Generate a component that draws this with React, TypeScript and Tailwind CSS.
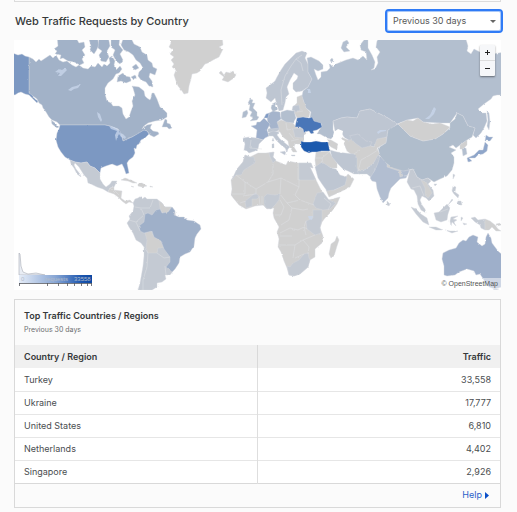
import React from "react";

type Shape = { name: string; fill: string; d: string };

const GREY = "#d0d0d0";
const PALE = "#c4cad3";
const SOFT = "#bec6d2";

const countries: Shape[] = [
  // North America
  { name: "Greenland", fill: GREY, d: "M168 36H222L223 45 219 47 223 49 221 53 219 57 213 60 208 63 205 64 202 68 200 71 197 73 192 74 191 79 189 86 188 93 184 94 182 91 178 86 176 81 174 75 176 70 172 67 174 64 171 60 174 57 170 54 173 50 169 47 171 43Z" },
  { name: "Iceland", fill: GREY, d: "M219 73 221 71 224 75 226 72 230 73 233 71 236 75 234 78 228 82 222 80 224 77Z" },
  { name: "Canada", fill: "#a2b2c8", d: "M29 57 33 59 36 62 39 59 41 61 44 59 50 55 53 58 56 55 59 60 63 62 67 61 72 65 76 67 79 65 83 68 88 69 91 66 95 67 98 63 102 67 104 64 107 66 110 63 109 58 112 56 115 61 114 65 117 69 120 66 122 69 119 73 116 74 113 79 108 83 105 88 105 94 107 101 111 103 113 106 119 106 122 108 123 114 126 119 129 117 131 111 133 106 132 101 135 95 133 88 132 86 139 87 144 91 145 96 147 98 150 100 152 93 154 93 157 99 160 107 164 110 167 113 167 117 162 120 155 121 148 123 144 126 142 129 147 125 152 124 150 128 153 131 158 132 159 134 154 137 150 135 147 131 144 130 140 133 132 137 123 141 122 136 118 129 110 126 105 125 H60L57 122 52 120 49 117 46 112 43 108 42 105 39 103 37 99 33 96 29 94Z" },
  { name: "Vancouver Island", fill: "#a2b2c8", d: "M51 120 55 123 59 127 57 128 52 124Z" },
  { name: "Newfoundland", fill: "#a2b2c8", d: "M165 119 167 120 167 123 170 124 172 128 169 129 167 127 162 127Z" },
  { name: "Baffin Island", fill: "#a2b2c8", d: "M124 36H130L134 44 140 47 142 52 147 55 148 60 152 63 153 67 157 69 155 75 150 73 149 77 152 81 153 87 149 86 146 82 141 80 138 76 139 72 143 68 140 63 136 60 133 55 129 52 124 50 121 45Z" },
  { name: "Southampton Island", fill: "#a2b2c8", d: "M118 76 123 73 125 76 130 77 131 81 126 83 121 81 117 82Z" },
  { name: "Victoria Island", fill: "#a2b2c8", d: "M57 36H75L79 43 84 42 85 47 82 50 85 55 82 59 84 63 80 65 74 62 68 61 63 58 60 59 61 55 55 54 57 51 54 49 58 46Z" },
  { name: "Somerset Island", fill: "#a2b2c8", d: "M88 36H97L99 45 96 51 94 54 90 50 91 46Z" },
  { name: "Boothia", fill: "#a2b2c8", d: "M99 36H108L110 46 107 51 109 57 106 62 101 61 99 55 102 51 98 48Z" },
  { name: "Melville Peninsula", fill: "#a2b2c8", d: "M111 36H120L119 45 123 50 120 54 123 60 120 64 116 61 113 55 115 50 111 47Z" },
  { name: "Foxe Islands", fill: "#a2b2c8", d: "M132 67 136 64 139 68 135 70Z M131 77 135 75 137 78 133 79Z" },
  { name: "Alaska", fill: "#7c98c2", d: "M10 52 18 55 22 54 25 56 29 57V93L32 95 35 99 38 101 37 103 33 99 29 95 25 94 21 92 18 93 15 95 10 94Z" },
  { name: "United States", fill: "#7c98c2", d: "M60 125H105L110 126 116 129 120 131 122 137 123 141 132 137 139 133 144 130 147 131 149 134 145 138 141 140 139 144 137 145 136 149 134 148 135 153 133 157 129 160 127 163 128 168 129 173 126 174 124 168 122 164 117 166 112 164 106 166 101 168 100 173 95 168 90 166 87 162 81 163 75 162 70 160 65 157 61 152 58 147 56 140 57 133 59 129Z" },
  { name: "Mexico", fill: PALE, d: "M70 160 75 162 81 163 87 162 90 166 95 168 100 173 100 179 103 184 106 187 110 184 112 181 117 181 114 187 110 188 108 192 103 189 97 187 91 184 88 183 87 178 84 175 79 167 75 163 74 165 76 169 80 174 81 177 77 174 74 168 71 164Z" },
  { name: "Central America", fill: GREY, d: "M108 192 110 188 114 187 114 190 122 191 121 198 125 201 130 200 133 203 129 202 126 204 122 201 118 197 114 194Z" },
  { name: "Caribbean", fill: GREY, d: "M121 180 125 178 131 180 137 183 133 183 128 181Z M138 184 142 183 147 186 142 187 138 186Z M131 186 134 187 132 187Z M150 186 153 187 150 187Z" },
  // South America
  { name: "South America", fill: PALE, d: "M133 203 135 199 138 198 141 196 142 199 145 197 147 199 153 199 157 199 162 203 165 207 172 207 175 211 176 222 178 255 178 264 174 270 170 275 165 275 166 279 162 282 157 283 157 287 152 290H138L140 283 142 272 143 266 144 256 144 247 141 243 136 240 133 233 129 227 127 223 130 219 129 216 133 211 134 206Z" },
  { name: "Guianas", fill: GREY, d: "M159 201 162 203 165 207 171 207 168 212 162 213 160 208Z" },
  { name: "Bolivia", fill: GREY, d: "M145 233 151 231 154 237 161 241 164 248 158 248 157 253 148 253 146 247 147 240Z" },
  { name: "Brazil", fill: "#9fb0c9", d: "M172 207 175 211 174 215 179 217 184 217 187 220 194 221 200 225 201 229 197 234 195 238 194 246 190 252 185 254 180 257 179 263 175 269 172 272 166 267 170 262 170 257 164 249 161 241 154 237 152 231 144 233 140 231 139 226 144 222 145 214 148 213 152 215 156 210 160 209 162 213 168 212Z" },
  // Europe
  { name: "Nordics", fill: SOFT, d: "M266 98 267 93 266 88 270 85 275 81 277 77 281 70 285 64 291 58 296 53 302 51 307 53 305 58 308 64 308 72 312 79 308 87 302 91 296 92 293 89 293 83 297 79 298 76 294 73 290 80 287 87 289 94 286 97 285 103 283 110 279 111 277 105 275 98 271 102Z" },
  { name: "Baltics", fill: GREY, d: "M297 97 302 95 304 102 306 108 310 112 309 117 297 118 294 112 293 107 297 103Z" },
  { name: "Lithuania", fill: SOFT, d: "M293 106 299 105 300 110 296 112 292 110Z" },
  { name: "United Kingdom", fill: "#afbccd", d: "M250 99 253 100 252 103 255 103 253 108 257 112 257 116 259 117 257 120 250 121 253 118 250 116 252 112 249 110 250 105 248 103Z" },
  { name: "Ireland", fill: "#afbccd", d: "M243 112 247 110 248 113 246 117 242 118Z" },
  { name: "Denmark", fill: "#afbccd", d: "M272 104 276 102 275 106 278 109 273 112 271 108Z" },
  { name: "Central Europe", fill: GREY, d: "M277 122 281 120 293 123 296 127 305 128 306 134 304 140 301 144 295 144 294 147 297 152 293 152 289 146 288 141 283 137 280 132 274 130 270 130 271 128Z" },
  { name: "Romania", fill: PALE, d: "M293 129 302 128 305 134 303 138 295 137Z" },
  { name: "Switzerland", fill: SOFT, d: "M268 129 277 126 280 129 275 132 268 132Z" },
  { name: "Poland", fill: "#b3bfcf", d: "M281 112 287 110 294 111 296 118 293 123 286 122 281 119Z" },
  { name: "Germany", fill: "#a5b4cc", d: "M269 113 273 111 280 112 281 119 277 122 279 128 271 129 268 124 267 118Z" },
  { name: "Netherlands", fill: "#7f9bc5", d: "M264 118 266 114 269 113 268 118Z" },
  { name: "France", fill: "#9caecb", d: "M251 126 256 125 257 122 260 122 264 118 270 124 267 130 269 136 265 138 263 140 256 138 257 130Z" },
  { name: "Iberia", fill: SOFT, d: "M243 138 249 137 256 138 263 140 259 144 258 149 255 151 249 153 247 151 244 150 245 144Z" },
  { name: "Italy", fill: SOFT, d: "M268 133 273 131 279 132 277 135 280 139 285 143 290 147 288 149 287 152 285 148 281 145 276 140 273 136 269 136Z M280 152 286 151 285 155Z M272 143 274 144 274 148 272 148Z M273 138 274 141 272 141Z M291 155 295 155 295 156 292 156Z" },
  // Russia and Asia
  { name: "Russia", fill: "#b3bfcf", d: "M307 58 311 57 319 61 323 65 323 69 318 71 314 69 316 75 318 80 321 77 321 72 327 71 330 68 329 63 333 67 336 64 341 62 346 60 353 58 358 60 363 56 367 60 366 52 361 50 360 45 364 40 364 36 368 36 368 48 372 55 375 62 374 68 371 70 375 69 378 63 377 57 380 52 376 47 377 41 381 36H465L468 46 467 51 471 54 474 49 480 52 484 50 492 54 505 52V95L497 95 493 96 491 99 484 104 478 109 482 113 486 113 487 121 484 128 481 133 476 138 473 135 475 128 468 126 463 116 457 113 450 123 440 123 423 122 418 118 407 120 397 124 388 118 378 113 370 109 360 111 357 118 347 117 341 118 333 121 333 130 335 134 331 139 327 138 320 134 317 134 320 129 322 124 313 121 310 117 311 112 306 108 302 96 303 91 308 87 312 79 308 72 308 64Z" },
  { name: "Novaya Zemlya", fill: "#b3bfcf", d: "M343 42 347 40 349 43 346 47 350 51 344 52 341 48Z M330 60 332 58 334 61 331 62Z" },
  { name: "Sakhalin", fill: "#b3bfcf", d: "M487 111 489 113 490 122 489 130 487 126 488 120Z" },
  { name: "Kazakhstan", fill: SOFT, d: "M333 121 341 118 347 117 357 118 360 111 370 109 378 113 388 118 397 124 394 128 388 130 387 137 378 141 374 147 368 145 358 139 350 141 344 137 341 132 335 131Z" },
  { name: "Central Asia", fill: GREY, d: "M341 137 348 140 358 139 368 145 374 147 377 139 387 137 386 143 377 148 380 155 373 164 363 171 357 171 355 157 347 151Z" },
  { name: "Uzbekistan", fill: SOFT, d: "M349 136 358 134 366 141 372 142 370 146 362 148 355 143Z" },
  { name: "Caucasus", fill: GREY, d: "M322 139 331 140 338 144 337 150 331 147 327 143Z" },
  { name: "Levant and Iraq", fill: GREY, d: "M316 152 329 151 332 156 337 163 337 168 331 168 323 164 316 168 315 160Z" },
  { name: "Iran", fill: SOFT, d: "M330 150 337 152 345 153 354 154 357 158 357 168 360 174 354 174 348 171 343 169 337 163 332 157Z" },
  { name: "Yemen and Oman", fill: GREY, d: "M326 190 334 190 344 185 345 178 348 174 354 179 350 187 340 192 329 197Z" },
  { name: "Saudi Arabia", fill: SOFT, d: "M315 167 322 162 331 168 336 169 340 175 347 177 345 185 334 190 327 191 322 184 318 178Z" },
  { name: "Pakistan", fill: SOFT, d: "M357 171 363 171 373 164 378 155 382 158 377 167 374 172 372 178 367 174 359 174Z" },
  { name: "India", fill: "#b2bed1", d: "M370 178 375 170 378 163 380 157 385 158 387 164 394 168 400 170 410 170 406 178 400 179 396 183 391 188 389 193 388 198 383 203 380 197 377 189 376 182 372 181Z" },
  { name: "Sri Lanka", fill: PALE, d: "M387 201 390 204 389 206 387 205Z" },
  { name: "Nepal", fill: GREY, d: "M387 164 400 169 403 176 400 177 399 171 387 167Z" },
  { name: "China", fill: "#b0bdcc", d: "M398 124 403 129 410 136 423 141 435 139 443 134 450 128 450 123 455 119 457 113 463 116 468 126 475 128 472 137 467 140 460 145 456 148 453 145 449 147 456 150 451 153 454 157 454 163 452 170 447 176 440 179 434 182 428 178 422 180 417 177 413 169 403 171 393 168 386 163 380 156 378 148 386 143 387 137 388 130Z" },
  { name: "Mongolia", fill: GREY, d: "M398 124 407 120 413 121 418 118 423 122 432 124 440 123 450 127 443 134 435 139 423 141 410 136 403 129Z" },
  { name: "North Korea", fill: GREY, d: "M460 145 467 140 467 145 463 149 460 149Z" },
  { name: "South Korea", fill: "#b3bfcf", d: "M462 149 466 148 467 154 463 156Z" },
  { name: "Japan", fill: "#8fa6ca", d: "M486 135 489 137 493 137 490 141 485 141Z M485 142 488 145 487 151 483 154 478 155 475 158 469 158 472 161 468 162 467 158 474 155 479 150 483 150Z" },
  { name: "Taiwan and Hainan", fill: PALE, d: "M453 174 455 175 453 179Z M434 184 437 184 435 186Z" },
  { name: "Mainland Southeast Asia", fill: PALE, d: "M410 170 413 169 417 177 422 180 428 178 431 181 428 184 433 190 434 196 429 201 426 198 422 196 420 200 422 205 425 209 426 213 421 210 418 204 417 196 414 190 411 189 407 182Z" },
  { name: "Laos and Cambodia", fill: GREY, d: "M421 180 426 182 429 187 432 193 428 198 425 195 425 188Z" },
  { name: "Sumatra and Java", fill: PALE, d: "M411 207 416 209 421 214 427 218 429 225 423 222 416 214Z M429 227 436 227 443 230 436 230Z M445 230 450 231 458 231 452 233Z" },
  { name: "Borneo", fill: PALE, d: "M434 213 439 212 444 207 447 204 450 208 448 214 447 220 441 222 436 220Z" },
  { name: "Sulawesi", fill: PALE, d: "M451 217 458 216 453 219 457 220 454 222 456 226 452 222 451 226 450 221Z M461 217 463 218 461 221Z M463 223 467 224 464 225Z" },
  { name: "Philippines", fill: PALE, d: "M453 186 456 187 455 192 459 195 458 198 454 194 452 191Z M458 201 461 201 462 205 459 205 457 203Z M452 199 453 200 448 205Z" },
  { name: "Papua", fill: PALE, d: "M471 218 475 217 478 220 485 219V230L481 228 480 225 475 222Z" },
  { name: "Papua New Guinea", fill: GREY, d: "M485 219 490 221 495 225 498 229 501 231 496 231 492 227 489 230 485 230Z M496 224 501 223V225L497 226Z" },
  { name: "Australia", fill: "#9eafca", d: "M443 253 449 250 456 248 459 243 463 240 466 241 469 237 473 235 478 237 477 242 482 246 485 244 486 237 488 233 491 238 492 243 495 247 498 251 505 257V286L495 289 489 287 485 282 482 277 480 274 476 275 474 271 467 269 459 272 455 275 447 276 444 275 444 266 442 259Z M493 289 499 289 497 290 494 290Z" },
  // Africa
  { name: "Africa", fill: GREY, d: "M245 155 250 157 258 153 266 153 274 152 273 157 276 161 281 163 286 165 288 161 298 163 311 163 313 168 310 167 316 180 320 188 325 197 328 200 340 197 337 204 332 211 325 218 322 222 320 228 323 236 322 243 315 249 315 257 310 260 308 267 300 274 294 276 289 275 287 268 284 261 281 252 278 247 279 239 277 232 279 227 274 218 273 213 274 208 267 209 263 205 255 206 246 209 239 205 234 199 231 195 232 189 231 180 235 174 237 169 243 162Z" },
  { name: "Morocco", fill: PALE, d: "M245 155 250 157 254 157 255 163 244 170 241 175 236 175 232 180 235 173 237 169 243 162Z" },
  { name: "Tunisia", fill: PALE, d: "M269 153 274 152 273 157 276 160 273 163 270 157Z" },
  { name: "Egypt", fill: PALE, d: "M299 163 311 163 313 168 310 167 316 180H299Z" },
  { name: "Nigeria", fill: PALE, d: "M264 197 267 194 275 195 280 194 279 200 275 205 271 209 266 208 264 204Z" },
  { name: "Burkina Faso", fill: PALE, d: "M245 201 249 198 255 193 259 196 257 199 252 199 252 206 246 208Z" },
  { name: "Ethiopia", fill: PALE, d: "M317 193 323 192 329 200 336 203 330 209 323 210 316 208 313 204Z" },
  { name: "Kenya and Tanzania", fill: PALE, d: "M313 210 322 210 322 220 320 227 321 233 315 235 307 229 306 221 313 218Z" },
  { name: "South Africa", fill: PALE, d: "M287 266 290 267 293 263 299 260 304 254 308 253 309 258 310 260 308 267 300 274 294 276 289 275Z" },
  { name: "Madagascar", fill: GREY, d: "M337 236 339 240 337 246 334 256 331 258 329 254 331 244 335 241Z" },
  // Highlights
  { name: "Ukraine", fill: "#4a76b8", d: "M297 118 303 117 309 118 312 117 314 121 321 123 322 127 317 130 313 131 314 133 311 134 309 131 305 132 304 133 303 129 300 127 295 127Z" },
  { name: "Turkey", fill: "#1f5aae", d: "M301 141 304 142 310 142 316 141 322 142 328 142 329 147 330 151 322 151 317 152 312 152 309 153 304 151 301 147Z" },
];

const water =
  "M334 132 338 129 343 131 342 136 339 138 345 141 343 145 346 150 341 153 337 150 338 144 335 139 333 136Z M304 140 304 135 308 133 312 134 314 136 316 134 320 135 326 138 329 142 322 142 316 140 311 142 307 142Z";

const lakes =
  "M55 72 59 69 62 70 65 68 67 70 64 73 61 76 58 76 60 73Z M68 90 72 87 76 86 81 84 78 88 74 89 71 91Z M97 112 100 114 102 120 101 122 98 117Z M109 126 114 127 118 129 120 133 123 134 126 137 125 139 121 137 119 134 117 138 116 141 115 135 117 131 111 129Z M307 89 310 89 311 93 308 93Z M434 107 436 109 434 114 429 119 425 119 430 115Z M377 132 380 130 386 130 386 131 381 132 378 134Z M308 216 313 216 312 220 309 219Z";

const borders =
  "M282 105 281 90 285 76 291 66 296 59 301 63 303 71M296 59 302 55M286 123 287 130 293 129M289 133 294 139M291 141 299 139M297 112 303 111M262 149 250 148 251 140M236 175 245 182 256 189 268 182 273 174 273 164M256 189 256 194 243 196M245 182 245 194 232 194M268 182 281 178 299 187V179M298 163V180M281 178 280 194 287 203 300 200 314 205M299 187 295 195 300 200M280 200 284 207 281 215 275 215M287 203 292 208 303 210 308 209M280 233 290 228 298 230 304 227 307 229M292 208 289 220 281 225M292 236H280M279 245 295 245 293 258M295 245 303 240 315 235M303 240 309 247 308 254M304 254 295 258M306 221 304 227 306 235M240 203 246 201M259 196 260 206M262 196 262 206M144 215 141 208 135 207M141 208 150 208 153 200M144 215 136 222 129 220M136 222 140 231M144 247 148 253 147 267 143 280 143 290M157 253 164 258 170 257M165 266 166 275M110 188 115 193M114 190 119 195M316 158 322 158 329 152M322 158 323 164M404 176 409 175M412 188 420 186 424 196M358 171 361 160 370 155 378 150M360 150 354 154M440 212 448 209M324 198 331 204 328 210";

const rows = [
  ["Turkey", "33,558"],
  ["Ukraine", "17,777"],
  ["United States", "6,810"],
  ["Netherlands", "4,402"],
  ["Singapore", "2,926"],
];

function WorldMap() {
  return (
    <svg viewBox="14 40 487 250" className="block w-full" role="img" aria-label="World map of requests by country">
      <defs>
        <linearGradient id="scale">
          <stop offset="0" stopColor="#e6edf8" />
          <stop offset="0.5" stopColor="#88a6d4" />
          <stop offset="0.85" stopColor="#1d57b0" />
          <stop offset="1" stopColor="#0d47a1" />
        </linearGradient>
        <filter id="coast" filterUnits="userSpaceOnUse" x="8" y="34" width="499" height="262">
          <feTurbulence type="fractalNoise" baseFrequency="0.28" numOctaves="2" seed="4" />
          <feDisplacementMap in="SourceGraphic" scale="2" xChannelSelector="R" yChannelSelector="G" />
        </filter>
      </defs>
      <g filter="url(#coast)" strokeLinejoin="round">
        {countries.map((c) => (
          <path key={c.name} d={c.d} fill={c.fill} stroke="#d6dae0" strokeWidth="0.4" />
        ))}
        <path d={borders} fill="none" stroke="#dfe1e5" strokeWidth="0.5" />
        <path d={water} fill="#ffffff" />
        <path d={lakes} fill="#c9d7ec" fillOpacity="0.75" />
      </g>
      <path d="M19 275V253L20 254 21 266 23 272 28 274 36 273 45 275Z" fill="#e9edf4" stroke="#a9adb5" strokeWidth="0.6" />
      <rect x="19" y="275" width="73" height="8" fill="url(#scale)" />
      <path d="M19 283.500H92M19.500 283V286M47.500 283V286M58.500 283V286M67.500 283V286M74.500 283V286M81.500 283V286M87.500 283V286M91.500 283V286" stroke="#55585f" strokeWidth="0.8" />
      <g className="font-['Liberation_Sans',sans-serif] text-[6px]" fill="#b3bccb">
        <text x="21" y="281">0</text>
        <text x="45" y="281">requests</text>
        <text x="74" y="281">33558</text>
      </g>
    </svg>
  );
}

export default function App() {
  return (
    <main className="min-h-screen bg-[#fbfbfb] pr-4 pl-[14px] font-[Inter,sans-serif] text-[#36393a]">
      <div className="h-[2px] border-x border-b border-[#dcdcdc]" />
      <header className="flex h-[38px] items-center justify-between">
        <h1 className="pl-px text-[11px] font-medium">Web Traffic Requests by Country</h1>
        <div className="relative">
          <select
            aria-label="Time range"
            className="block h-5 w-[114px] appearance-none rounded-[2px] border border-[#a9c8f8] bg-white pl-[5px] text-[9px] text-[#595959] outline-2 outline-[#2f7bf6]"
          >
            <option>Previous 30 days</option>
          </select>
          <span className="pointer-events-none absolute top-[9px] right-[5px] border-x-[3px] border-t-[3px] border-x-transparent border-t-[#666]" />
        </div>
      </header>

      <section className="relative bg-white">
        <WorldMap />
        <div className="absolute top-[5px] right-[6px] flex w-[15px] flex-col divide-y divide-[#dddddd] rounded-[1px] bg-[#f6f7f9] shadow-[0_1px_2px_rgba(0,0,0,0.45)]">
          <button aria-label="Zoom in" className="flex h-4 items-center justify-center">
            <svg viewBox="0 0 7 7" className="size-[7px]"><path d="M1 3.500H6M3.500 1V6" stroke="#222" /></svg>
          </button>
          <button aria-label="Zoom out" className="flex h-[15px] items-center justify-center">
            <svg viewBox="0 0 7 7" className="size-[7px]"><path d="M1 3.500H6" stroke="#222" /></svg>
          </button>
        </div>
        <div className="absolute right-0 bottom-0 bg-white/50 px-[3px] font-['Liberation_Sans',sans-serif] text-[7px] leading-3 text-[#555]">
          © OpenStreetMap
        </div>
      </section>

      <section className="mt-[9px] border border-[#d9d9d9]">
        <div className="h-[45px] px-[9px] pt-[9px]">
          <h2 className="text-[9px] leading-[14px] font-semibold">Top Traffic Countries / Regions</h2>
          <p className="text-[7px] leading-[14px] text-[#6b6e70]">Previous 30 days</p>
        </div>
        <table className="w-full table-fixed border-collapse text-[9px]">
          <thead>
            <tr className="h-[23px] bg-[#f0f0f0]">
              <th scope="col" className="border-r border-[#d9d9d9] px-[9px] text-left font-semibold">Country / Region</th>
              <th scope="col" className="px-[9px] text-right font-semibold">Traffic</th>
            </tr>
          </thead>
          <tbody className="bg-white text-[#4a4d50]">
            {rows.map(([name, count]) => (
              <tr key={name} className="h-[23px] border-b border-[#e6e6e6] last:border-[#d9d9d9]">
                <td className="border-r border-[#dedede] px-[9px]">{name}</td>
                <td className="px-[9px] text-right">{count}</td>
              </tr>
            ))}
          </tbody>
        </table>
        <footer className="flex h-[23px] items-center justify-end px-[11px]">
          <a href="#help" className="flex items-center gap-[3px] text-[9px] text-[#2c5fc9]">
            Help
            <svg viewBox="0 0 4 7" className="h-[7px] w-1"><path d="M0 0L4 3.500 0 7Z" fill="#0b50c8" /></svg>
          </a>
        </footer>
      </section>
    </main>
  );
}
